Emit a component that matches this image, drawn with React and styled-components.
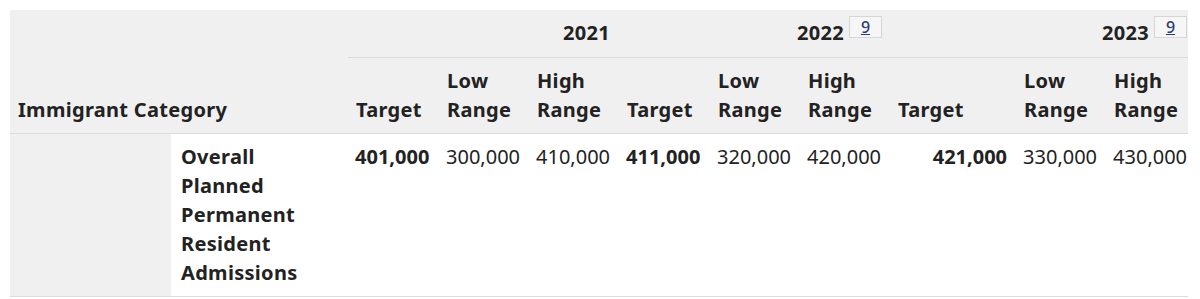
import styled, { createGlobalStyle } from "styled-components";

const GlobalStyle = createGlobalStyle`
  body {
    margin: 0;
    background: #fff;
    font-family: "Noto Sans", "Open Sans", sans-serif;
    color: #222;
  }
`;

const columns = [161, 177, 91, 90, 90, 91, 90, 90, 126, 90, 82];

const years = [
  { year: "2021", note: null, padRight: 9 },
  { year: "2022", note: "9", padRight: 8 },
  { year: "2023", note: "9", padRight: 1 },
];

const figures = [
  { value: "401,000", bold: true },
  { value: "300,000" },
  { value: "410,000" },
  { value: "411,000", bold: true },
  { value: "320,000" },
  { value: "420,000" },
  { value: "421,000", bold: true, right: true },
  { value: "330,000" },
  { value: "430,000" },
];

const App = () => {
  return (
    <>
      <GlobalStyle />
      <Wrapper>
        <Table>
          <colgroup>
            {columns.map((w, i) => (
              <col key={i} style={{ width: `${w}px` }} />
            ))}
          </colgroup>
          <thead>
            <tr>
              <CategoryHead colSpan={2} rowSpan={2}>
                Immigrant Category
              </CategoryHead>
              {years.map((y) => (
                <YearHead key={y.year} colSpan={3} $padRight={y.padRight}>
                  {y.year}
                  {y.note && (
                    <Note>
                      <a href="#note-9">{y.note}</a>
                    </Note>
                  )}
                </YearHead>
              ))}
            </tr>
            <tr>
              {years.map((y) => (
                <SubHeads key={y.year} />
              ))}
            </tr>
          </thead>
          <tbody>
            <tr>
              <SideCell />
              <LabelCell>Overall Planned Permanent Resident Admissions</LabelCell>
              {figures.map((f, i) => (
                <ValueCell key={i} $bold={f.bold} $right={f.right}>
                  {f.value}
                </ValueCell>
              ))}
            </tr>
          </tbody>
        </Table>
      </Wrapper>
    </>
  );
};

const SubHeads = () => (
  <>
    <SubHead>Target</SubHead>
    <SubHead>Low Range</SubHead>
    <SubHead>High Range</SubHead>
  </>
);

const Wrapper = styled.div`
  padding: 10px;
`;

const Table = styled.table`
  width: 1178px;
  table-layout: fixed;
  border-collapse: collapse;
  font-size: 20px;
  line-height: 28.8px;
`;

const HeadBase = styled.th`
  background: #f0f0f0;
  font-weight: 700;
  letter-spacing: 0.3px;
  color: #222;
  padding: 9px 8px;
  text-align: left;
`;

const CategoryHead = styled(HeadBase)`
  vertical-align: bottom;
  border-bottom: 1px solid #dcdcdc;
`;

const YearHead = styled(HeadBase)`
  text-align: right;
  white-space: nowrap;
  padding-right: ${(p) => p.$padRight}px;
  border-bottom: 1px solid #dcdcdc;
`;

const SubHead = styled(HeadBase)`
  vertical-align: bottom;
  border-bottom: 1px solid #dcdcdc;
`;

const Note = styled.span`
  display: inline-block;
  position: relative;
  top: -7px;
  margin-left: 5px;
  padding: 0 11px;
  font-size: 16px;
  font-weight: 500;
  letter-spacing: 0;
  line-height: 20px;
  vertical-align: baseline;
  background: #f6f6f6;
  border: 1px solid #d6d6d6;

  a {
    color: #2a3a7a;
    text-decoration: underline;
  }
`;

const SideCell = styled.th`
  background: #f0f0f0;
  border-bottom: 1px solid #dcdcdc;
`;

const LabelCell = styled.th`
  text-align: left;
  vertical-align: top;
  font-weight: 700;
  letter-spacing: 0.3px;
  padding: 9px 50px 9px 10px;
  border-bottom: 1px solid #dcdcdc;
`;

const ValueCell = styled.td`
  vertical-align: top;
  white-space: nowrap;
  padding: 9px ${(p) => (p.$right ? "9px" : "0")} 9px ${(p) => (p.$right ? "0" : "7px")};
  text-align: ${(p) => (p.$right ? "right" : "left")};
  font-weight: ${(p) => (p.$bold ? 700 : 400)};
  border-bottom: 1px solid #dcdcdc;
`;

export default App;
